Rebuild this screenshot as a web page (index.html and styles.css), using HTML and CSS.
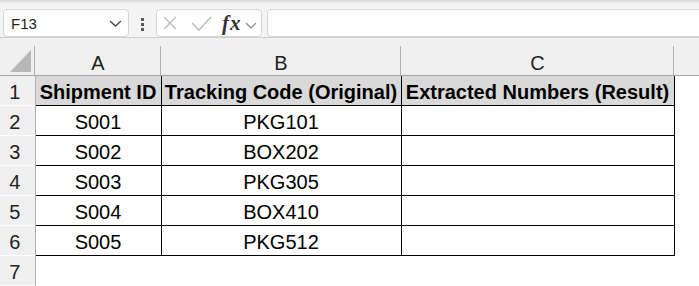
FILE: index.html
```html
<!DOCTYPE html>
<html lang="en">
<head>
    <meta charset="UTF-8">
    <meta name="viewport" content="width=device-width, initial-scale=1.0">
    <title>Shipments</title>
    <link rel="stylesheet" href="styles.css">
</head>
<body>
    <div class="toolbar">
        <div class="namebox">
            <span>F13</span>
            <svg class="chev" width="13" height="7" viewBox="0 0 13 7"><path d="M1 1 L6.5 6 L12 1" fill="none" stroke="#444" stroke-width="1.3"/></svg>
        </div>
        <div class="grip"><i></i><i></i><i></i></div>
        <div class="fxbox">
            <svg class="cancel" width="14" height="14" viewBox="0 0 14 14"><path d="M1 1 L13 13 M13 1 L1 13" fill="none" stroke="#b8b8b8" stroke-width="1.3"/></svg>
            <svg class="enter" width="21" height="15" viewBox="0 0 21 15"><path d="M1 7 L8 14 L20 1" fill="none" stroke="#b8b8b8" stroke-width="1.3"/></svg>
            <span class="fx">fx</span>
            <svg class="chev-sm" width="12" height="7" viewBox="0 0 12 7"><path d="M1 1 L6 6 L11 1" fill="none" stroke="#8a8a8a" stroke-width="1.2"/></svg>
        </div>
        <div class="formula"></div>
    </div>

    <table class="sheet">
        <colgroup>
            <col class="c-row">
            <col class="c-a">
            <col class="c-b">
            <col class="c-c">
            <col>
        </colgroup>
        <tr class="colhead">
            <th class="corner"><svg width="35" height="37" viewBox="0 0 35 37"><polygon points="31,12 31,34 10,34" fill="#b7b7b7"/></svg></th>
            <th>A</th>
            <th>B</th>
            <th>C</th>
            <th class="last"></th>
        </tr>
        <tr>
            <th class="rowhead">1</th>
            <td class="title">Shipment ID</td>
            <td class="title">Tracking Code (Original)</td>
            <td class="title">Extracted Numbers (Result)</td>
            <td class="blank"></td>
        </tr>
        <tr>
            <th class="rowhead">2</th>
            <td class="cell">S001</td>
            <td class="cell">PKG101</td>
            <td class="cell"></td>
            <td class="blank"></td>
        </tr>
        <tr>
            <th class="rowhead">3</th>
            <td class="cell">S002</td>
            <td class="cell">BOX202</td>
            <td class="cell"></td>
            <td class="blank"></td>
        </tr>
        <tr>
            <th class="rowhead">4</th>
            <td class="cell">S003</td>
            <td class="cell">PKG305</td>
            <td class="cell"></td>
            <td class="blank"></td>
        </tr>
        <tr>
            <th class="rowhead">5</th>
            <td class="cell">S004</td>
            <td class="cell">BOX410</td>
            <td class="cell"></td>
            <td class="blank"></td>
        </tr>
        <tr>
            <th class="rowhead">6</th>
            <td class="cell">S005</td>
            <td class="cell">PKG512</td>
            <td class="cell"></td>
            <td class="blank"></td>
        </tr>
        <tr>
            <th class="rowhead">7</th>
            <td class="blank"></td>
            <td class="blank"></td>
            <td class="blank"></td>
            <td class="blank"></td>
        </tr>
    </table>
</body>
</html>
```

FILE: styles.css
```css
body {
    margin: 0;
    font-family: "Liberation Sans", Arial, sans-serif;
    background: #fff;
    overflow: hidden;
}
.toolbar {
    display: flex;
    align-items: flex-start;
    height: 38px;
    padding: 9px 0 0 3px;
    box-sizing: border-box;
    background: linear-gradient(#dadada, #f4f4f4 4px);
    border-bottom: 1px solid #cfcfcf;
    overflow: hidden;
}
.namebox {
    display: flex;
    align-items: center;
    width: 126px;
    height: 28px;
    box-sizing: border-box;
    padding: 0 6px 0 7px;
    background: #fff;
    border: 1px solid #d6d6d6;
    border-radius: 4px;
    font-size: 15px;
    color: #222;
}
.namebox .chev {
    margin-left: auto;
}
.grip {
    display: flex;
    flex-direction: column;
    gap: 2px;
    margin: 9px 12px 0 12px;
}
.grip i {
    display: block;
    width: 3px;
    height: 3px;
    background: #5a5a5a;
}
.fxbox {
    display: flex;
    align-items: center;
    width: 106px;
    height: 28px;
    box-sizing: border-box;
    padding-left: 6px;
    background: #fff;
    border: 1px solid #d6d6d6;
    border-radius: 4px;
}
.cancel {
    margin-right: 14px;
}
.enter {
    margin-right: 10px;
}
.fx {
    font-family: "Liberation Serif", "Times New Roman", serif;
    font-style: italic;
    font-weight: bold;
    font-size: 21px;
    letter-spacing: 1px;
    color: #333;
    line-height: 20px;
    margin-right: 3px;
}
.chev-sm {
    margin-top: 5px;
}
.formula {
    flex: 1;
    height: 28px;
    margin: 0 -6px 0 5px;
    box-sizing: border-box;
    background: #fff;
    border: 1px solid #d6d6d6;
    border-radius: 4px;
}
.sheet {
    width: 699px;
    table-layout: fixed;
    border-collapse: collapse;
    font-size: 20px;
}
.c-row { width: 35px; }
.c-a { width: 126px; }
.c-b { width: 240px; }
.c-c { width: 273px; }
.sheet th,
.sheet td {
    padding: 4px 0 0;
    line-height: 25px;
    text-align: center;
    white-space: nowrap;
    overflow: hidden;
    border: 1px solid transparent;
}
.colhead th {
    padding-top: 14px;
    line-height: 23px;
    font-weight: normal;
    color: #222;
    border-top: none;
    border-left: none;
    border-right: none;
    border-bottom: 1px solid #a6a6a6;
    background: linear-gradient(#b0b0b0, #b0b0b0) right bottom / 1px 29px no-repeat, #f0f0f0;
}
.colhead th.last {
    background: #f0f0f0;
}
.colhead th.corner {
    padding: 0;
    line-height: 0;
}
.corner svg {
    display: block;
}
.rowhead {
    padding-right: 5px !important;
    font-weight: normal;
    color: #222;
    background: #f0f0f0;
    border-left: none !important;
    border-right: 1px solid #b0b0b0 !important;
}
.title {
    font-weight: bold;
    background: #d9d9d9;
    border: 1px solid #000 !important;
}
.cell {
    color: #000;
    border: 1px solid #000 !important;
}
.blank {
    border-right: none !important;
}
```
